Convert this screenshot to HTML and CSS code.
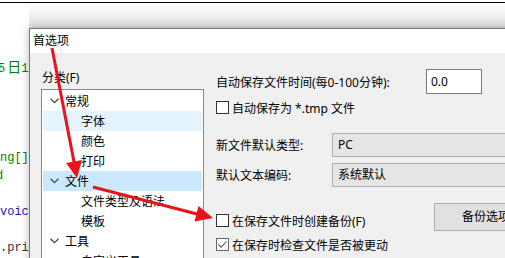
FILE: index.html
```html
<!DOCTYPE html>
<html lang="zh-CN">
<head>
    <meta charset="UTF-8">
    <title>首选项</title>
    <link rel="stylesheet" href="styles.css">
</head>
<body>
    <!-- Editor behind the dialog -->
    <div class="topline"></div>
    <div class="editor">
        <div class="code green shift">5<span class="wide">日</span>1</div>
        <div class="code"></div>
        <div class="code"></div>
        <div class="code"></div>
        <div class="code"></div>
        <div class="code green">ng[]</div>
        <div class="code green cut">d</div>
        <div class="code"></div>
        <div class="code blue">voic</div>
        <div class="code"></div>
        <div class="code dark">.pri</div>
    </div>

    <!-- Preferences dialog -->
    <div class="dialog">
        <div class="titlebar">首选项</div>
        <div class="dialog-body">
            <div class="left-col">
                <div class="group-label">分类(F)</div>
                <div class="tree">
                    <div class="row node"><span class="chev"><svg width="9" height="6" viewBox="0 0 9 6"><polyline points="0.5,0.8 4.5,4.6 8.5,0.8" fill="none" stroke="#444" stroke-width="1.2"/></svg></span>常规</div>
                    <div class="row leaf hover">字体</div>
                    <div class="row leaf">颜色</div>
                    <div class="row leaf">打印</div>
                    <div class="row node selected"><span class="chev"><svg width="9" height="6" viewBox="0 0 9 6"><polyline points="0.5,0.8 4.5,4.6 8.5,0.8" fill="none" stroke="#444" stroke-width="1.2"/></svg></span>文件</div>
                    <div class="row leaf">文件类型及语法</div>
                    <div class="row leaf">模板</div>
                    <div class="row node"><span class="chev"><svg width="9" height="6" viewBox="0 0 9 6"><polyline points="0.5,0.8 4.5,4.6 8.5,0.8" fill="none" stroke="#444" stroke-width="1.2"/></svg></span>工具</div>
                    <div class="row leaf">自定义工具</div>
                </div>
            </div>

            <div class="right-col">
                <div class="autosave">
                    <span class="autosave-label">自动保存文件时间(每0-100分钟):</span>
                    <span class="textbox">0.0</span>
                </div>
                <div class="check first"><span class="box"></span>自动保存为 *.tmp 文件</div>

                <div class="fields">
                    <span class="field-label">新文件默认类型:</span>
                    <span class="combo">PC</span>
                    <span class="field-label">默认文本编码:</span>
                    <span class="combo">系统默认</span>
                </div>

                <div class="backup">
                    <div class="backup-checks">
                        <div class="check"><span class="box"></span>在保存文件时创建备份(F)</div>
                        <div class="check"><span class="box checked"><svg width="11" height="11" viewBox="0 0 11 11"><polyline points="1.5,5.5 4.2,8.2 9.5,2.5" fill="none" stroke="#555" stroke-width="1.1"/></svg></span>在保存时检查文件是否被更动</div>
                    </div>
                    <div class="btn">备份选项</div>
                </div>
            </div>
        </div>
    </div>

    <!-- Red annotation arrows -->
    <svg class="arrows" width="505" height="258" viewBox="0 0 505 258">
        <line x1="52" y1="48" x2="74" y2="162" stroke="#e8131b" stroke-width="3"/>
        <polygon points="77,178 82,160 66,163" fill="#e8131b"/>
        <line x1="93" y1="187" x2="197" y2="214" stroke="#e8131b" stroke-width="3"/>
        <polygon points="213,218 194.5,221.5 198.5,206" fill="#e8131b"/>
    </svg>
</body>
</html>
```

FILE: styles.css
```css
/* Page */
body {
    margin: 0;
    width: 505px;
    height: 258px;
    overflow: hidden;
    position: relative;
    background-color: #fff;
    font-family: "Noto Sans", "Noto Sans CJK SC", sans-serif;
    font-size: 12px;
    color: #000;
}
.topline {
    margin-top: 2px;
    height: 1px;
    background-color: #000;
}

/* Editor text behind */
.editor {
    padding-top: 56px;
}
.code {
    height: 18px;
    line-height: 18px;
    font-family: "Liberation Mono", "Noto Sans CJK SC", monospace;
    font-size: 12px;
    white-space: pre;
}
.wide {
    font-size: 14px;
    margin-left: 2px;
}
.shift {
    text-indent: -2px;
}
.cut {
    text-indent: -4px;
}
.green {
    color: #008000;
}
.blue {
    color: #1a1ab8;
}
.dark {
    color: #333;
}

/* Dialog */
.dialog {
    position: absolute;
    left: 29px;
    top: 28px;
    width: 520px;
    height: 260px;
    border: 1px solid #777;
    background-color: #f0f0f0;
    box-shadow: 0 0 9px rgba(0, 0, 0, 0.28);
}
.dialog::before {
    content: "";
    position: absolute;
    left: -1px;
    right: 0;
    top: -26px;
    height: 25px;
    background: linear-gradient(rgba(0, 0, 0, 0), rgba(0, 0, 0, 0.12));
}
.titlebar {
    height: 24px;
    line-height: 23px;
    padding-left: 3px;
    background-color: #fff;
}
.dialog-body {
    display: flex;
    gap: 12px;
    padding-left: 11px;
}

/* Left column: category tree */
.left-col {
    width: 163px;
    flex-shrink: 0;
}
.group-label {
    margin-top: 17px;
    padding-left: 1px;
    height: 16px;
    line-height: 16px;
}
.tree {
    margin-top: 3px;
    height: 200px;
    border: 1px solid #828790;
    background-color: #fff;
    padding: 1px 1px 0 1px;
}
.row {
    display: flex;
    align-items: center;
    height: 20px;
}
.node {
    padding-left: 7px;
}
.chev {
    display: flex;
    width: 15px;
}
.leaf {
    padding-left: 38px;
}
.hover {
    background-color: #e5f3ff;
}
.selected {
    background-color: #cce8ff;
}

/* Right column */
.right-col {
    flex: 1;
}
.autosave {
    display: flex;
    align-items: center;
    margin-top: 16px;
    height: 25px;
}
.autosave-label {
    width: 210px;
}
.textbox {
    box-sizing: border-box;
    width: 56px;
    height: 25px;
    line-height: 23px;
    padding-left: 4px;
    border: 1px solid #7a7a7a;
    background-color: #fff;
}
.check {
    display: flex;
    align-items: center;
    height: 13px;
    gap: 3px;
}
.check.first {
    margin-top: 7px;
}
.box {
    box-sizing: border-box;
    display: flex;
    align-items: center;
    justify-content: center;
    width: 13px;
    height: 13px;
    border: 1px solid #333;
    background-color: #fff;
}
.box.checked {
    border-color: #666;
}
.fields {
    display: grid;
    grid-template-columns: 116px 200px;
    row-gap: 6px;
    margin-top: 19px;
    align-items: center;
}
.combo {
    box-sizing: border-box;
    height: 24px;
    line-height: 22px;
    padding-left: 5px;
    border: 1px solid #adadad;
    background-color: #e5e5e5;
}
.backup {
    display: flex;
    margin-top: 16px;
}
.backup-checks {
    width: 218px;
    padding-top: 11px;
    display: flex;
    flex-direction: column;
    gap: 11px;
}
.btn {
    box-sizing: border-box;
    width: 104px;
    height: 28px;
    line-height: 26px;
    text-align: center;
    border: 1px solid #adadad;
    background-color: #e1e1e1;
}

/* Annotation overlay */
.arrows {
    position: absolute;
    left: 0;
    top: 0;
}
```
